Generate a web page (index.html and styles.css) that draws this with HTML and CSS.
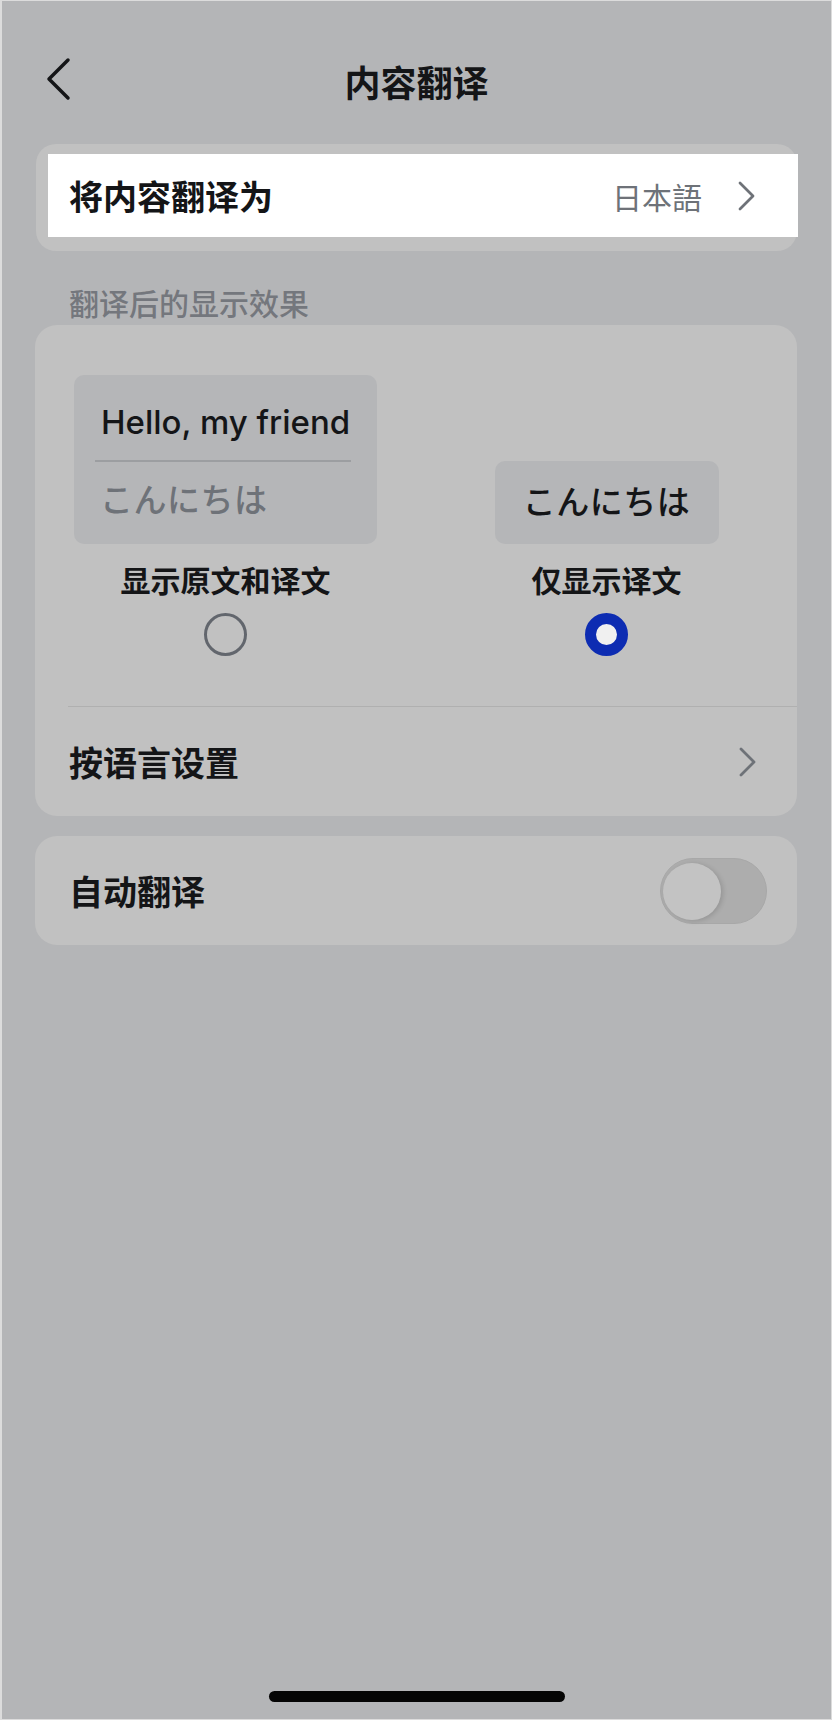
FILE: index.html
```html
<!DOCTYPE html>
<html lang="zh-CN">
<head>
  <meta charset="UTF-8">
  <title>内容翻译</title>
  <link rel="stylesheet" href="styles.css">
</head>
<body>

  <div class="screen">

    <!-- 顶部导航 -->
    <div class="nav">
      <div class="nav-left">
        <svg class="back" width="26" height="44" viewBox="0 0 26 44">
          <polyline points="22,3 3,22 22,41" fill="none" stroke="#141517" stroke-width="3.5" stroke-linecap="round" stroke-linejoin="round"/>
        </svg>
      </div>
      <div class="nav-title">内容翻译</div>
      <div></div>
    </div>

    <!-- 目标语言 -->
    <div class="card card-lang">
      <div class="row row-lang">
        <span class="row-label">将内容翻译为</span>
        <span class="row-value">日本語</span>
        <svg class="arrow" width="17" height="30" viewBox="0 0 17 30">
          <polyline points="2,2 15,15 2,28" fill="none" stroke="#6e7278" stroke-width="2.8" stroke-linecap="round" stroke-linejoin="round"/>
        </svg>
      </div>
    </div>

    <div class="section-title">翻译后的显示效果</div>

    <!-- 显示效果 -->
    <div class="card">
      <div class="modes">
        <div class="mode">
          <div class="preview-slot">
            <div class="preview preview-both">
              <div class="preview-en">Hello, my friend</div>
              <div class="preview-line"></div>
              <div class="preview-jp muted">こんにちは</div>
            </div>
          </div>
          <div class="mode-label">显示原文和译文</div>
          <div class="radio"></div>
        </div>
        <div class="mode">
          <div class="preview-slot">
            <div class="preview preview-only">
              <div class="preview-jp">こんにちは</div>
            </div>
          </div>
          <div class="mode-label">仅显示译文</div>
          <div class="radio radio-on"></div>
        </div>
      </div>
      <div class="divider"></div>
      <div class="row">
        <span class="row-label">按语言设置</span>
        <svg class="arrow" width="17" height="30" viewBox="0 0 17 30">
          <polyline points="2,2 15,15 2,28" fill="none" stroke="#6e7278" stroke-width="2.8" stroke-linecap="round" stroke-linejoin="round"/>
        </svg>
      </div>
    </div>

    <!-- 自动翻译 -->
    <div class="card card-auto">
      <div class="row">
        <span class="row-label">自动翻译</span>
        <div class="switch">
          <div class="knob"></div>
        </div>
      </div>
    </div>

    <div class="home-bar"></div>

  </div>

</body>
</html>
```

FILE: styles.css
```css
body {
  margin: 0;
  font-family: "Noto Sans CJK SC", "Noto Sans", sans-serif;
  color: #141517;
}
.screen {
  box-sizing: border-box;
  width: 832px;
  height: 1720px;
  background: #b4b5b7;
  border: 1px solid #dcdcdc;
  border-left-width: 2px;
  display: flex;
  flex-direction: column;
}
.nav {
  display: grid;
  grid-template-columns: 1fr auto 1fr;
  align-items: center;
  height: 78px;
  margin-top: 39px;
}
.nav-left {
  padding-left: 44px;
  display: flex;
}
.nav-title {
  font-size: 36px;
  font-weight: 700;
  line-height: 40px;
  padding-top: 4px;
}
.card {
  margin: 0 34px 0 33px;
  background: #c1c1c1;
  border-radius: 22px;
}
.card-lang {
  margin-top: 26px;
  margin-left: 34px;
  padding: 10px 0 14px 12px;
  border-radius: 20px;
}
.row {
  display: flex;
  align-items: center;
  height: 109px;
  padding: 0 41px 0 34px;
}
.row-lang {
  height: 83px;
  background: #fff;
  margin-right: -1px;
  padding-left: 21px;
  padding-right: 43px;
}
.row-label {
  flex: 1;
  font-size: 34px;
  font-weight: 700;
  line-height: 40px;
}
.row-value {
  font-size: 30px;
  color: #6e7278;
  margin-right: 36px;
  line-height: 40px;
}
.arrow {
  display: block;
}
.section-title {
  font-size: 30px;
  font-weight: 500;
  color: #74777d;
  line-height: 30px;
  padding-left: 67px;
  margin: 36px 0 8px;
}
.modes {
  display: grid;
  grid-template-columns: 1fr 1fr;
  padding: 50px 0 50px;
}
.mode {
  display: flex;
  flex-direction: column;
  align-items: center;
}
.preview-slot {
  height: 169px;
  display: flex;
  align-items: flex-end;
}
.preview {
  background: #b5b6b8;
  border-radius: 10px;
  box-sizing: border-box;
}
.preview-both {
  width: 303px;
  height: 169px;
  padding: 25px 26px 0 21px;
}
.preview-en {
  font-family: Inter, "Liberation Sans", sans-serif;
  font-size: 33px;
  font-weight: 500;
  line-height: 44px;
  padding-left: 6px;
}
.preview-line {
  height: 2px;
  background: #9c9ea1;
  margin: 16px 0 14px;
}
.preview-jp {
  font-family: "Noto Sans CJK JP", "Noto Sans CJK SC", sans-serif;
  font-size: 33px;
  font-weight: 500;
  line-height: 44px;
  letter-spacing: 0.5px;
}
.preview-both .preview-jp {
  padding-left: 5px;
}
.muted {
  color: #6e7278;
}
.preview-only {
  width: 224px;
  height: 83px;
  display: flex;
  align-items: center;
  justify-content: center;
  padding-bottom: 6px;
}
.mode-label {
  font-size: 30px;
  font-weight: 700;
  line-height: 40px;
  margin-top: 15px;
}
.radio {
  box-sizing: border-box;
  width: 43px;
  height: 43px;
  border-radius: 50%;
  border: 3px solid #62666d;
  margin-top: 14px;
}
.radio-on {
  border: 11px solid #0d2cb2;
  background: #f0f0f0;
}
.divider {
  height: 1px;
  background: #b0b0b0;
  margin-left: 33px;
}
.card-auto {
  margin-top: 20px;
}
.card-auto .row {
  padding-left: 34px;
  padding-right: 30px;
}
.switch {
  box-sizing: border-box;
  width: 107px;
  height: 66px;
  border-radius: 33px;
  background: #adadad;
  border: 1px solid #a8a8a8;
  display: flex;
  align-items: center;
  padding: 1px 2px 0;
}
.knob {
  width: 58px;
  height: 57px;
  border-radius: 50%;
  background: #c3c3c3;
  box-shadow: 2px 1px 5px rgba(0, 0, 0, 0.14);
}
.home-bar {
  width: 296px;
  height: 11px;
  border-radius: 6px;
  background: #050505;
  margin: auto auto 17px;
}
```
